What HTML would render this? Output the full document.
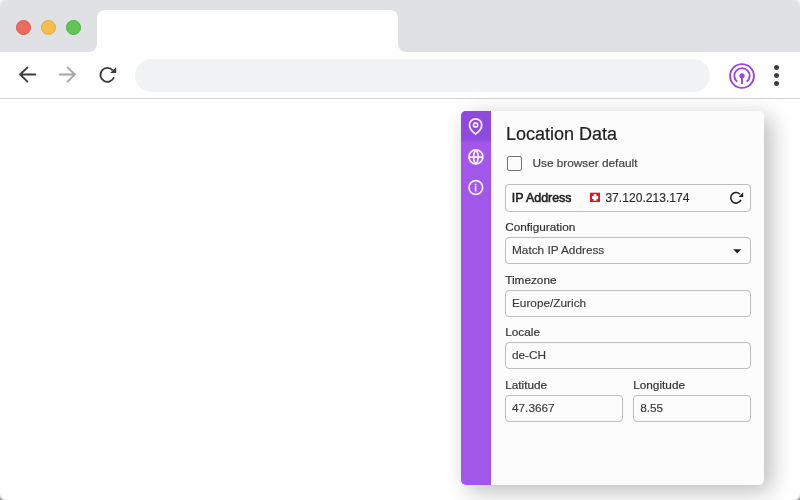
<!DOCTYPE html>
<html><head><meta charset="utf-8">
<style>
*{box-sizing:border-box;margin:0;padding:0}
html,body{width:800px;height:500px;overflow:hidden;background:#fff;font-family:"Liberation Sans",sans-serif;position:relative}
.abs{position:absolute}
#tabbar{left:0;top:0;width:800px;height:52px;background:#dfe1e5}
.dot{width:15px;height:15px;border-radius:50%;top:19.6px}
#tab{left:97px;top:10px;width:301px;height:50px;background:#fff;border-radius:8px 8px 0 0}
#toolbar{left:0;top:52px;width:800px;height:46px;background:#fff}
#line{left:0;top:98px;width:800px;height:1px;background:#d0d1d4}
#url{left:135px;top:58.6px;width:574.5px;height:33.2px;border-radius:16.6px;background:#f0f2f4}
#panel{will-change:transform;left:461px;top:111px;width:303px;height:374px;border-radius:5px;background:#fcfcfc;box-shadow:7px 6px 22px rgba(0,0,0,0.27);overflow:hidden}
#side{left:0;top:0;width:30px;height:374px;background:#a157e9}
#sel{left:0;top:0;width:30px;height:33px;background:linear-gradient(to bottom,#8d4adc 0,#8d4adc 27.5px,#a157e9 32.5px)}
.lbl{font-size:11.8px;color:#333;-webkit-text-stroke:0.2px #333}
.box{border:1px solid #bdbdbd;border-radius:4px;background:#fcfcfc;height:27px}
.val{font-size:11.8px;color:#3a3a3a;-webkit-text-stroke:0.15px #3a3a3a}
</style></head><body>
<div id="tabbar" class="abs"></div>
<div class="abs dot" style="left:16px;background:#ed6a5e;border:1px solid #d9574c"></div>
<div class="abs dot" style="left:41px;background:#f5bf4f;border:1px solid #dea93f"></div>
<div class="abs dot" style="left:66px;background:#61c554;border:1px solid #50ad45"></div>
<div id="tab" class="abs"></div>
<div id="toolbar" class="abs"></div>
<!-- inverse corners -->
<div class="abs" style="left:89px;top:44px;width:8px;height:8px;background:#fff"></div>
<div class="abs" style="left:89px;top:44px;width:8px;height:8px;background:#dfe1e5;border-bottom-right-radius:8px"></div>
<div class="abs" style="left:398px;top:44px;width:8px;height:8px;background:#fff"></div>
<div class="abs" style="left:398px;top:44px;width:8px;height:8px;background:#dfe1e5;border-bottom-left-radius:8px"></div>
<div id="line" class="abs"></div>
<div id="url" class="abs"></div>

<!-- nav icons -->
<svg class="abs" style="left:0;top:52px" width="130" height="46" viewBox="0 52 130 46">
  <g fill="none" stroke="#3c3c3c" stroke-width="1.8" stroke-linecap="round" stroke-linejoin="round">
    <path d="M35.3 74.5H20M27.5 67.4L20.1 74.5L27.5 81.6"/>
  </g>
  <g fill="none" stroke="#a6a6a6" stroke-width="1.8" stroke-linecap="round" stroke-linejoin="round">
    <path d="M59.6 74.5H75M67.6 67.4L74.9 74.5L67.6 81.6"/>
  </g>
  <path d="M112.76 70.3A7 7 0 1 0 113.98 77.19" fill="none" stroke="#3c3c3c" stroke-width="1.8"/>
  <path d="M116.2 67.0V73.1H110.1Z" fill="#3c3c3c"/>
</svg>

<!-- extension icon -->
<svg class="abs" style="left:728px;top:61.5px" width="28" height="28" viewBox="0 0 28 28">
  <g fill="none" stroke="#9a46e2" stroke-width="1.9">
  <circle cx="14" cy="14" r="11.9"/>
  <path d="M9.26 19.87A7.7 7.7 0 1 1 18.74 19.87"/>
  <path d="M14 15.5v6.6"/>
  </g>
  <circle cx="14" cy="13.8" r="2.6" fill="#9a46e2"/>
</svg>
<div class="abs" style="left:773.7px;top:64.9px;width:5px;height:5px;border-radius:50%;background:#3f3f3f"></div>
<div class="abs" style="left:773.7px;top:73.1px;width:5px;height:5px;border-radius:50%;background:#3f3f3f"></div>
<div class="abs" style="left:773.7px;top:81.3px;width:5px;height:5px;border-radius:50%;background:#3f3f3f"></div>

<div id="panel" class="abs">
  <div id="side" class="abs"></div>
  <div id="sel" class="abs"></div>
  <svg class="abs" style="left:0;top:0" width="30" height="90" viewBox="461 111 30 90">
    <g fill="none" stroke="#fdeeff" stroke-width="1.75" stroke-linejoin="round">
      <path d="M481.75 124.9C481.75 129.5 475.6 134.1 475.6 134.1S469.45 129.5 469.45 124.9A6.15 6.15 0 0 1 481.75 124.9Z"/>
      <circle cx="475.6" cy="124.9" r="2.05"/>
      <circle cx="475.9" cy="156.9" r="6.95"/>
      <path d="M469 157H482.8M475.9 150C472.7 153.5 472.7 160.3 475.9 163.8M475.9 150C479.1 153.5 479.1 160.3 475.9 163.8"/>
      <circle cx="475.8" cy="187.5" r="6.85"/>
      <path d="M475.6 186.6V190.9" stroke-linecap="round" stroke-width="1.6"/>
    </g>
    <circle cx="475.6" cy="184.5" r="0.95" fill="#fdeeff"/>
  </svg>
  <div class="abs" style="left:45px;top:12.6px;font-size:18px;color:#222;-webkit-text-stroke:0.2px #222">Location Data</div>
  <div class="abs" style="left:46.3px;top:45px;width:14.6px;height:14.8px;border:1.7px solid #727272;border-radius:2px"></div>
  <div class="abs lbl" style="left:71.5px;top:45.4px;font-size:11.8px;color:#4a4a4a">Use browser default</div>
  <div class="abs box" style="left:44px;top:73px;width:246px;height:28px"></div>
  <div class="abs" style="left:50.8px;top:80.3px;font-size:12.4px;color:#222;-webkit-text-stroke:0.55px #222">IP Address</div>
  <div class="abs val" style="left:144.4px;top:80.1px;font-size:12.1px;color:#2a2a2a">37.120.213.174</div>
  <div class="abs lbl" style="left:44.2px;top:108.9px">Configuration</div>
  <div class="abs box" style="left:44px;top:126.3px;width:246px;height:27.2px"></div>
  <div class="abs val" style="left:51px;top:131.9px">Match IP Address</div>
  <div class="abs lbl" style="left:44.2px;top:161.9px">Timezone</div>
  <div class="abs box" style="left:44px;top:178.8px;width:246px;height:27.2px"></div>
  <div class="abs val" style="left:51px;top:184.9px">Europe/Zurich</div>
  <div class="abs lbl" style="left:44.2px;top:214.4px">Locale</div>
  <div class="abs box" style="left:44px;top:231.3px;width:246px;height:27.2px"></div>
  <div class="abs val" style="left:51px;top:237.4px">de-CH</div>
  <div class="abs lbl" style="left:44.2px;top:267.4px">Latitude</div>
  <div class="abs box" style="left:44px;top:284px;width:117.5px;height:27.2px"></div>
  <div class="abs val" style="left:51px;top:289.9px">47.3667</div>
  <div class="abs lbl" style="left:172.2px;top:267.4px">Longitude</div>
  <div class="abs box" style="left:172.2px;top:284px;width:117.7px;height:27.2px"></div>
  <div class="abs val" style="left:179.2px;top:289.9px">8.55</div>
</div>
<svg class="abs" style="left:0;top:0;pointer-events:none" width="800" height="500" viewBox="0 0 800 500">
  <rect x="590" y="192.7" width="10" height="9.3" fill="#e8141c"/>
  <path d="M592 196.1H598.2V198.9H592Z M593.6 194.3H596.5V200.7H593.6Z" fill="#fff"/>
  <path d="M739.9 194.2A5.3 5.3 0 1 0 740.9 199.9" fill="none" stroke="#222" stroke-width="1.6"/>
  <path d="M743.2 192.3V196.9H738.6Z" fill="#222"/>
  <path d="M733.2 249.2H741.2L737.2 253.4Z" fill="#222"/>
</svg>
<div class="abs" style="left:0;top:493px;width:7px;height:7px;background:radial-gradient(circle at 7px 0px, rgba(255,255,255,0) 6.5px, rgba(80,80,80,0.6) 9px)"></div>
<div class="abs" style="left:793px;top:493px;width:7px;height:7px;background:radial-gradient(circle at 0px 0px, rgba(255,255,255,0) 6.5px, rgba(80,80,80,0.6) 9px)"></div>
<div class="abs" style="left:0;top:0;width:7px;height:7px;background:radial-gradient(circle at 7px 7px, rgba(255,255,255,0) 6px, rgba(250,250,250,0.8) 8.5px)"></div>
<div class="abs" style="left:793px;top:0;width:7px;height:7px;background:radial-gradient(circle at 0px 7px, rgba(255,255,255,0) 6px, rgba(250,250,250,0.8) 8.5px)"></div>
</body></html>
